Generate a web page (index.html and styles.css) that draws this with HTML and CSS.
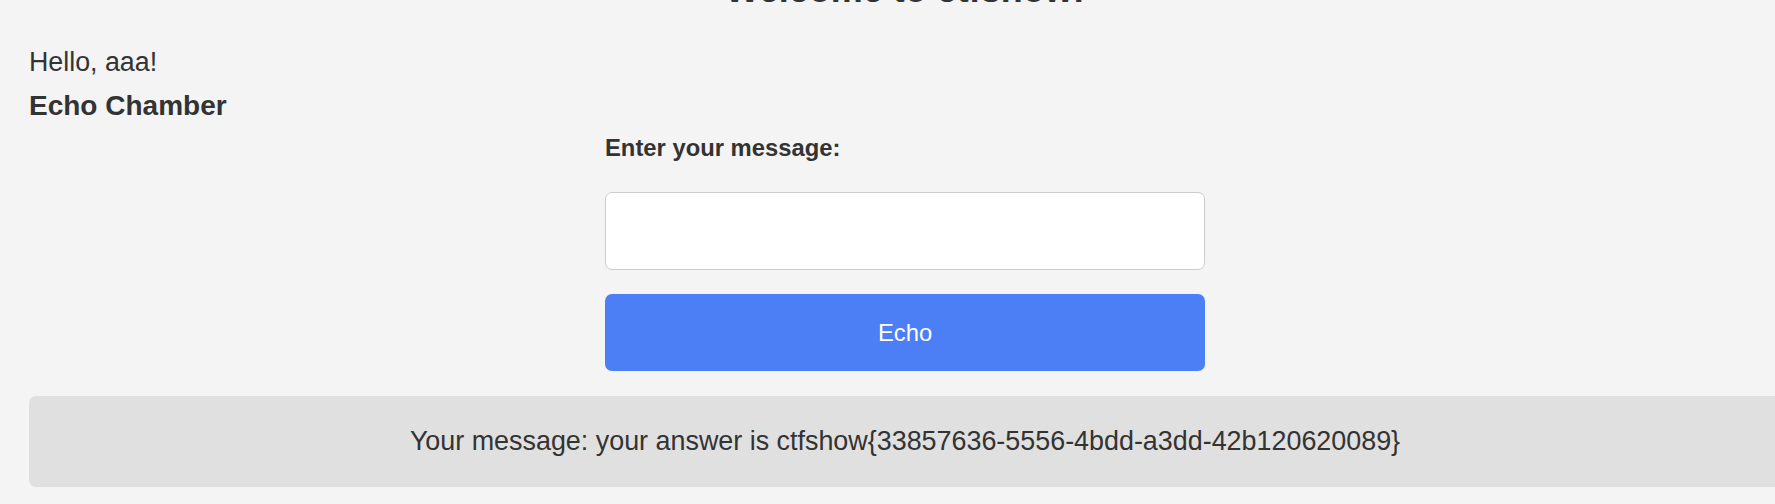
FILE: index.html
```html
<!DOCTYPE html>
<html lang="en">
<head>
<meta charset="utf-8">
<title>Echo Chamber</title>
<link rel="stylesheet" href="styles.css">
</head>
<body>
<div class="page">
  <h1 class="title">Welcome to ctfshow!</h1>
  <p class="greet">Hello, aaa!</p>
  <h3 class="room">Echo Chamber</h3>
  <form class="echo-form">
    <label class="echo-label" for="msg">Enter your message:</label>
    <input class="echo-input" id="msg" type="text">
    <button class="echo-btn" type="button">Echo</button>
  </form>
  <div class="result">Your message: your answer is ctfshow{33857636-5556-4bdd-a3dd-42b120620089}</div>
</div>
</body>
</html>
```

FILE: styles.css
```css
html {
  overflow: hidden;
  background: #f4f4f4;
}
body {
  margin: 0;
  background: #f4f4f4;
  color: #333333;
  font-family: "Liberation Sans", Arial, sans-serif;
}
.page {
  width: 1752px;
  margin-left: 29px;
  display: flex;
  flex-direction: column;
}
.title {
  margin: -30px 0 0;
  font-size: 36px;
  line-height: 40px;
  font-weight: bold;
  text-align: center;
  color: #333333;
}
.greet {
  margin: 36px 0 0;
  font-size: 26.8px;
  line-height: 32px;
}
.room {
  margin: 11.7px 0 0;
  font-size: 28px;
  line-height: 32px;
  font-weight: bold;
}
.echo-form {
  width: 600px;
  margin: 12px auto 0;
  display: flex;
  flex-direction: column;
}
.echo-label {
  font-size: 23.8px;
  line-height: 28px;
  font-weight: bold;
}
.echo-input {
  box-sizing: border-box;
  margin: 30.6px 0 0;
  height: 78px;
  width: 100%;
  border: 1px solid #cccccc;
  border-radius: 7px;
  background: #ffffff;
  padding: 0 15px;
  font-family: inherit;
  font-size: 24px;
}
.echo-btn {
  box-sizing: border-box;
  margin: 24px 0 0;
  height: 77px;
  width: 100%;
  border: none;
  border-radius: 7px;
  background: #4c7ef5;
  color: #ffffff;
  font-family: inherit;
  font-size: 23.8px;
}
.result {
  box-sizing: border-box;
  margin-top: 25px;
  height: 91px;
  border-radius: 7px;
  background: #e0e0e0;
  display: flex;
  align-items: center;
  justify-content: center;
  font-size: 26.9px;
}
```
